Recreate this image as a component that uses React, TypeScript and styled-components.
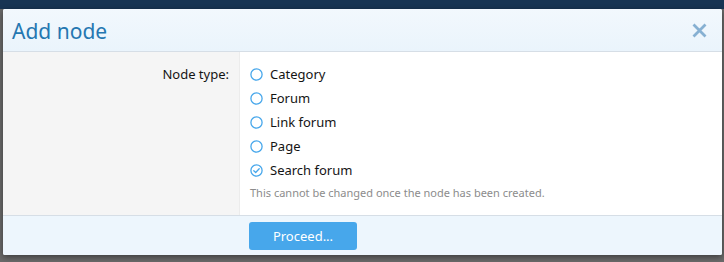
import React from 'react';
import styled, { createGlobalStyle } from 'styled-components';

const GlobalStyle = createGlobalStyle`
    html, body {
        margin: 0;
        padding: 0;
        background: #626262;
        font-family: "Noto Sans", "Open Sans", "DejaVu Sans", sans-serif;
    }
`;

const Page = styled.div`
    width: 724px;
    height: 262px;
    overflow: hidden;
    background: linear-gradient(to bottom, #173453 0, #173453 9px, #6a6a6a 9px);
    padding: 9px 2px 0 3px;
    box-sizing: border-box;
`;

const Overlay = styled.div`
    box-shadow: 0 2px 6px rgba(0, 0, 0, 0.45);
    border-radius: 2px;
    overflow: hidden;
    width: 719px;
    background: #fff;
`;

const Header = styled.div`
    height: 42px;
    display: flex;
    align-items: center;
    justify-content: space-between;
    padding: 0 15px 0 9px;
    background: linear-gradient(to bottom, #f2f8fd, #eaf4fc);
    border-bottom: 1px solid #d6dee6;
`;

const Title = styled.h2`
    margin: 0;
    font-size: 21px;
    font-weight: 400;
    color: #2577b1;
    padding-top: 1px;
`;

const Close = styled.button`
    border: 0;
    background: none;
    padding: 0;
    width: 16px;
    height: 16px;
    display: flex;
    align-items: center;
    justify-content: center;
    cursor: pointer;
`;

const Body = styled.div`
    display: flex;
    height: 163px;
`;

const LabelCol = styled.div`
    width: 237px;
    background: #f5f5f5;
    border-right: 1px solid #ececec;
    box-sizing: border-box;
    padding: 10px 10px 0 0;
    text-align: right;
    font-size: 13px;
    color: #141414;
`;

const LabelText = styled.div`
    height: 24px;
    line-height: 24px;
`;

const FieldCol = styled.div`
    flex: 1;
    padding: 10px 0 0 10px;
`;

const Option = styled.label`
    display: flex;
    align-items: center;
    height: 24px;
    gap: 7px;
    font-size: 13px;
    color: #141414;
    cursor: pointer;
`;

const Hint = styled.div`
    margin-top: 3px;
    font-size: 11px;
    line-height: 16px;
    color: #8c8c8c;
`;

const Footer = styled.div`
    height: 40px;
    box-sizing: border-box;
    border-top: 1px solid #d6dee6;
    background: #edf6fd;
    padding: 6px 0 0 246px;
`;

const Button = styled.button`
    width: 108px;
    height: 28px;
    border: 0;
    border-radius: 3px;
    background: #47a7eb;
    color: #fff;
    font-family: inherit;
    font-size: 13px;
    cursor: pointer;
`;

const Radio = ({ checked }: { checked?: boolean }) => (
    <svg width="13" height="13" viewBox="0 0 13 13">
        <circle cx="6.5" cy="6.5" r="5.6" fill="#fff" stroke="#47a7eb" strokeWidth="1.3" />
        {checked && (
            <path d="M3.8 6.7 L5.7 8.5 L9.2 4.8" fill="none" stroke="#47a7eb" strokeWidth="1.3" strokeLinecap="round" strokeLinejoin="round" />
        )}
    </svg>
);

const options = ['Category', 'Forum', 'Link forum', 'Page', 'Search forum'];

export default function App() {
    return (
        <>
            <GlobalStyle />
            <Page>
                <Overlay>
                    <Header>
                        <Title>Add node</Title>
                        <Close aria-label="Close">
                            <svg width="15" height="15" viewBox="0 0 15 15">
                                <path d="M1.5 1.5 L13.5 13.5 M13.5 1.5 L1.5 13.5" stroke="#86b0d2" strokeWidth="2.8" />
                            </svg>
                        </Close>
                    </Header>
                    <Body>
                        <LabelCol>
                            <LabelText>Node type:</LabelText>
                        </LabelCol>
                        <FieldCol>
                            {options.map(o => (
                                <Option key={o}>
                                    <Radio checked={o === 'Search forum'} />
                                    {o}
                                </Option>
                            ))}
                            <Hint>This cannot be changed once the node has been created.</Hint>
                        </FieldCol>
                    </Body>
                    <Footer>
                        <Button>Proceed...</Button>
                    </Footer>
                </Overlay>
            </Page>
        </>
    );
}
